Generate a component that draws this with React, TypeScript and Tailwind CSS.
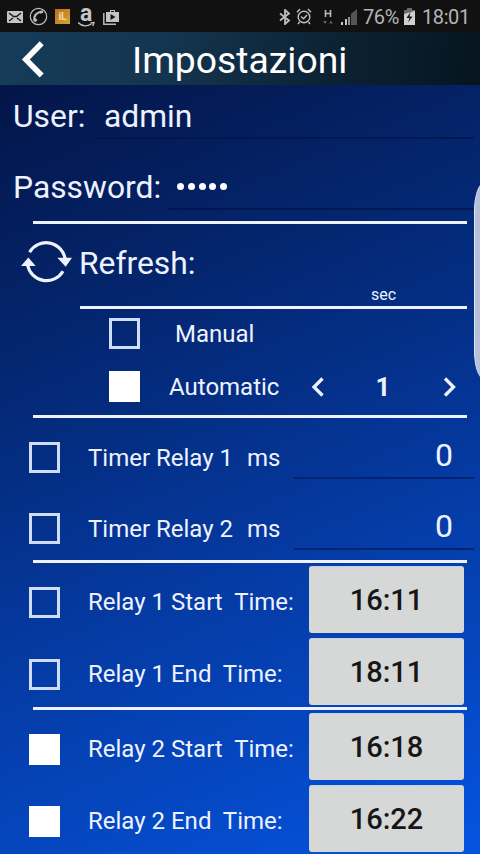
import type { ReactNode } from 'react'

const ROBOTO = "font-['Roboto','Liberation_Sans',sans-serif]"

export default function App() {
  return (
    <div className={`relative h-[854px] w-[480px] overflow-hidden text-[#eef2ff] ${ROBOTO}`}>
      <StatusBar />
      <Header />

      <main className="h-[769px] bg-[linear-gradient(157deg,#031548_0%,#042163_20%,#042e84_42%,#053aa2_60%,#0545bc_78%,#0554e2_100%)]">
        {/* Credentials */}
        <div className="flex h-[71px] pl-[13px] pr-[6px] text-[31.8px] leading-[35px]">
          <span className="w-[83px] whitespace-nowrap pt-[14px]">User:</span>
          <span className="h-[54px] flex-1 border-b-2 border-[#021445]/70 pl-[8px] pt-[14px]">admin</span>
        </div>
        <div className="flex h-[65px] pl-[13px] pr-[6px] text-[31.8px] leading-[35px]">
          <span className="w-[155px] whitespace-nowrap pt-[14px]">Password:</span>
          <span className="flex h-[54px] flex-1 gap-[3.8px] border-b-2 border-[#021445]/70 pl-[9px] pt-[27px]">
            {[0, 1, 2, 3, 4].map(i => (
              <i key={i} className="size-[7px] rounded-full bg-white" />
            ))}
          </span>
        </div>
        <Divider />

        {/* Refresh */}
        <div className="flex h-[82px] pl-[20px]">
          <RefreshIcon />
          <span className="ml-[6px] w-[290px] pt-[22px] text-[31.8px] leading-[35px]">Refresh:</span>
          <span className="ml-[2px] pt-[62px] text-[16px] leading-[18px]">sec</span>
        </div>
        <Divider inset />
        <div className="flex h-[49px] items-center pl-[109px] text-[24px]">
          <Check />
          <span className="pl-[35px]">Manual</span>
        </div>
        <div className="flex h-[57px] items-center pl-[109px] text-[24px]">
          <Check on />
          <span className="w-[170px] pl-[29px]">Automatic</span>
          <Arrow d="M12.5 2.5 4 11l8.5 8.5" />
          <span className="w-[114px] pt-[2px] text-center text-[26px] font-bold">1</span>
          <Arrow d="M5 2.5l8.5 8.5L5 19.5" />
        </div>
        <Divider />

        {/* Relay timers */}
        <TimerRow label="Timer Relay 1" />
        <TimerRow label="Timer Relay 2" />
        <Divider />

        {/* Relay schedules */}
        <TimeRow label="Relay 1 Start  Time:" time="16:11" />
        <TimeRow label="Relay 1 End  Time:" time="18:11" />
        <Divider />
        <TimeRow label="Relay 2 Start  Time:" time="16:18" on />
        <TimeRow label="Relay 2 End  Time:" time="16:22" on />
      </main>

      {/* Edge panel handle */}
      <div className="absolute left-[474px] top-[183px] h-[196px] w-[20px] rounded-[10px/28px] border-l border-[#e0e6fa] bg-[#b6c0db]" />
    </div>
  )
}

function StatusBar() {
  return (
    <div className="flex h-[32px] items-center bg-[#111111] pt-[1px] text-[#b5b5b5]">
      <svg className="ml-[7px]" width="16" height="12" viewBox="0 0 16 12">
        <rect width="16" height="12" rx="1" fill="#c5c5c5" />
        <path d="M2 2l4.5 3.5h3L14 2M2 10l4-3M14 10l-4-3" fill="none" stroke="#181818" strokeWidth="1.5" />
      </svg>
      <svg className="ml-[6px]" width="19" height="19" viewBox="0 0 19 19" fill="none" stroke="#bdbdbd">
        <circle cx="9.5" cy="9.5" r="8.2" strokeWidth="1.2" />
        <path d="M12.8 4.5C8 5.3 5 8.6 5.1 13.4" strokeWidth="2" />
        <path d="M10.8 5.4l3.2-.9M5.2 14.2l2.5-2" strokeWidth="2.6" />
      </svg>
      <div className="ml-[7px] flex size-[15px] items-center justify-center bg-[linear-gradient(135deg,#bd6c22,#d6a52c)] text-[10px] font-bold leading-none text-[#f3dfae]">
        iL
      </div>
      <div className="relative ml-[8px] h-[20px] w-[17px]">
        <span className="absolute -top-[4px] left-[2px] text-[23px] font-bold leading-[22px] text-[#c5c5c5]">a</span>
        <svg className="absolute left-0 top-[14px]" width="17" height="6" viewBox="0 0 17 6" fill="none" stroke="#c5c5c5">
          <path d="M0 1.5c4 4 9 4 13.5 1.5M12.5 2l3.5-.4-1.2 3.4" strokeWidth="1.3" />
        </svg>
      </div>
      <svg className="ml-[8px]" width="16" height="16" viewBox="0 0 16 16">
        <path d="M.8 4v11.2H13" fill="none" stroke="#b8b8b8" strokeWidth="1.5" />
        <path d="M3 3h4V1h5v2h4v10H3zm5-1v1h3V2z" fill="#c4c4c4" fillRule="evenodd" />
        <path d="M7.5 5v6l5-3z" fill="#151515" />
      </svg>

      <svg className="ml-[160px]" width="12" height="16" viewBox="0 0 12 16" fill="none" stroke="#bdbdbd" strokeWidth="1.8">
        <path d="M1 4.5l9 7L6 15V1l4 3.5-9 7" />
      </svg>
      <svg className="ml-[5px]" width="16" height="17" viewBox="0 0 16 17" fill="none" stroke="#bdbdbd" strokeWidth="1.4">
        <circle cx="8" cy="9" r="5.8" />
        <path d="M1 4.2L4 1M15 4.2L12 1M3.5 14L2 16M12.5 14l1.5 2M5 8.5l2.5 2.3L11 7" />
      </svg>
      <svg className="ml-[11px]" width="10" height="16" viewBox="0 0 10 16" fill="none">
        <path d="M2.5 1v7M7.5 1v7M2.5 4.5h5" stroke="#bdbdbd" strokeWidth="1.6" />
        <path d="M0 12h4l-2 3zM6 14.5h4l-2-3z" fill="#5c5c5c" />
      </svg>
      <svg className="ml-[7px]" width="17" height="16" viewBox="0 0 17 16">
        <path d="M1 13h2v3H1zM5 10h2v6H5z" fill="#c4c4c4" />
        <path d="M8 8h2v8H8z" fill="#8e8e8e" />
        <path d="M11 5l6-5v16h-6z" fill="#555555" />
      </svg>
      <span className="ml-[6px] w-[37px] whitespace-nowrap pt-[1px] text-[20px] leading-[24px] tracking-[-0.4px]">76%</span>
      <svg className="ml-[4px]" width="11" height="17" viewBox="0 0 11 17">
        <path d="M3 0h5v2h3v15H0V2h3z" fill="#6b6b6b" />
        <path d="M0 6l11-3v14H0z" fill="#d0d0d0" />
        <path d="M6.5 4L2.5 10h3L4 14.5 8.5 8.5h-3z" fill="#151515" />
      </svg>
      <span className="ml-[7px] whitespace-nowrap pt-[1px] text-[20px] leading-[24px] tracking-[-0.4px]">18:01</span>
    </div>
  )
}

function Header() {
  return (
    <div className="flex h-[53px] items-center bg-[linear-gradient(100deg,#153c59_0%,#14354f_35%,#0c2436_65%,#06151f_100%)]">
      <svg className="ml-[20px]" width="26" height="40" viewBox="0 0 26 40" fill="none" stroke="#ffffff" strokeWidth="5.6">
        <path d="M21.7 4.3L5.8 20.5l15.9 16" />
      </svg>
      <h1 className="ml-[86px] mt-[3px] text-[37.3px] leading-[42px] text-white">Impostazioni</h1>
    </div>
  )
}

function RefreshIcon() {
  return (
    <svg className="mt-[15px]" width="53" height="46" viewBox="0 0 53 46" fill="none" stroke="#eef2ff" strokeWidth="3.2">
      <path d="M9.6 13.2A19.2 19.2 0 0 1 45.2 20.5" />
      <path d="M43 32.2A19.2 19.2 0 0 1 7.6 26" />
      <path d="M37.3 18.7H52l-6.3 9zM1 27h14.7l-7.4-8.6z" fill="#eef2ff" stroke="none" />
    </svg>
  )
}

function Divider({ inset = false }: { inset?: boolean }) {
  return <hr className={`mr-[13px] h-[3px] border-0 bg-[#eef2ff] ${inset ? 'ml-[80px]' : 'ml-[33px]'}`} />
}

function Check({ on = false }: { on?: boolean }) {
  return <span className={`size-[31px] shrink-0 border-[3px] ${on ? 'border-white bg-white' : 'border-[#cfdcfa]'}`} />
}

function Arrow({ d }: { d: string }) {
  return (
    <svg width="16" height="22" viewBox="0 0 16 22" fill="none" stroke="#eef2ff" strokeWidth="3.3">
      <path d={d} />
    </svg>
  )
}

function Row({ children }: { children: ReactNode }) {
  return <div className="flex h-[72px] items-center pl-[29px] text-[24px]">{children}</div>
}

function TimerRow({ label }: { label: string }) {
  return (
    <div className="flex h-[71px] items-start pl-[29px] text-[24px]">
      <span className="flex pt-[24px]"><Check /></span>
      <span className="w-[159px] shrink-0 whitespace-pre pl-[28px] pt-[22px]">{label}</span>
      <span className="w-[75px] shrink-0 pl-[28px] pt-[22px]">ms</span>
      <span className="h-[61px] w-[180px] border-b-2 border-[#03246f] pr-[21px] pt-[17px] text-right text-[32px] leading-[40px]">0</span>
    </div>
  )
}

function TimeRow({ label, time, on }: { label: string; time: string; on?: boolean }) {
  return (
    <Row>
      <span className="flex pt-[6px]"><Check on={on} /></span>
      <span className="w-[249px] shrink-0 whitespace-pre pl-[28px] pt-[6px]">{label}</span>
      <button className="h-[67px] w-[155px] rounded-[3px] border-t border-[#c5d0ea] bg-[#d6d8d8] pt-[2px] text-[29px] font-medium text-[#161616]">
        {time}
      </button>
    </Row>
  )
}
